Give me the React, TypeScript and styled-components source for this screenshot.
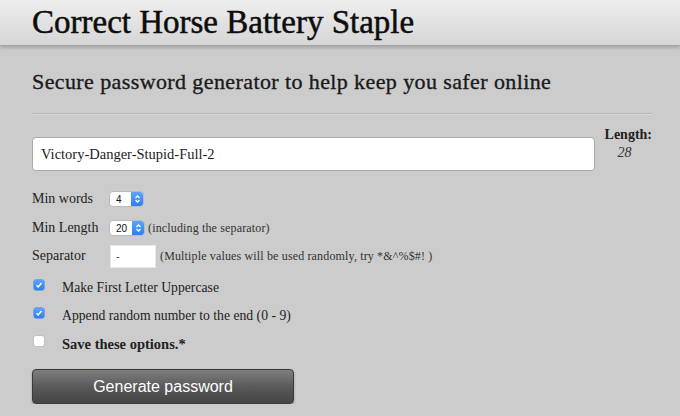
import * as React from "react";
import styled, { createGlobalStyle } from "styled-components";

const GlobalStyle = createGlobalStyle`
  html, body {
    margin: 0;
    padding: 0;
    background: #cccccc;
  }
  body {
    font-family: "Liberation Serif", "DejaVu Serif", serif;
    color: #222;
  }
`;

const Header = styled.header`
  height: 45px;
  padding-left: 32px;
  display: flex;
  align-items: center;
  background: linear-gradient(#eeeeee, #d6d6d6);
  border-bottom: 1px solid #a3a3a3;
  box-shadow: 0 2px 3px rgba(0, 0, 0, 0.18);
`;

const Title = styled.h1`
  margin: 0;
  font-size: 33px;
  font-weight: normal;
  color: #0d0d0d;
  -webkit-text-stroke: 0.5px #0d0d0d;
`;

const Main = styled.main`
  padding: 0 28px 0 32px;
`;

const Subtitle = styled.h2`
  margin: 22px 0 0;
  font-size: 22px;
  line-height: 28px;
  font-weight: normal;
  letter-spacing: 0.4px;
  color: #1a1a1a;
  -webkit-text-stroke: 0.35px #1a1a1a;
`;

const Rule = styled.hr`
  margin: 17px 0 0;
  border: 0;
  border-top: 1px solid #b8b8b8;
  border-bottom: 1px solid #d8d8d8;
`;

const PasswordRow = styled.div`
  display: flex;
  align-items: flex-start;
  margin-top: 12px;
`;

const PasswordInput = styled.div`
  box-sizing: border-box;
  width: 566px;
  height: 34px;
  margin-top: 10px;
  padding: 0 8px;
  display: flex;
  align-items: center;
  background: #fff;
  border: 1px solid #aaa;
  border-radius: 4px;
  font-size: 14.5px;
  color: #222;
`;

const LengthBox = styled.div`
  margin-left: 10px;
  display: flex;
  flex-direction: column;
`;

const LengthLabel = styled.div`
  font-size: 14px;
  font-weight: bold;
  line-height: 16px;
`;

const LengthValue = styled.div`
  font-size: 14px;
  font-style: italic;
  margin: 2px 0 0 13px;
  color: #333;
`;

const OptionRow = styled.div<{ $top: number }>`
  display: flex;
  align-items: center;
  height: 24px;
  margin-top: ${(p) => p.$top}px;
`;

const OptionLabel = styled.div`
  width: 78px;
  font-size: 14px;
  color: #222;
`;

const SelectBox = styled.div<{ $w: number }>`
  display: flex;
  height: 14px;
  width: ${(p) => p.$w}px;
  border-radius: 3px;
  background: #fff;
  box-shadow: 0 0 0 0.5px #aaa;
  overflow: hidden;
  font-family: "Liberation Sans", Arial, sans-serif;
  font-size: 10px;
`;

const SelectValue = styled.div`
  flex: 1;
  display: flex;
  align-items: center;
  padding-left: 6px;
  color: #111;
`;

const Stepper = styled.div`
  width: 12px;
  display: flex;
  align-items: center;
  justify-content: center;
  background: linear-gradient(#5aa3ff, #2e7ef0);
`;

const Note = styled.span`
  margin-left: 4px;
  font-size: 12px;
  letter-spacing: 0.15px;
  color: #333;
`;

const SeparatorInput = styled.div`
  box-sizing: border-box;
  width: 46px;
  height: 23px;
  background: #fff;
  border: 1px solid #e8e8e8;
  display: flex;
  align-items: center;
  padding-left: 5px;
  font-family: "Liberation Sans", Arial, sans-serif;
  font-size: 11px;
  color: #333;
`;

const CheckRow = styled.label<{ $top: number }>`
  display: flex;
  align-items: center;
  height: 20px;
  margin-top: ${(p) => p.$top}px;
`;

const Box = styled.span<{ $on: boolean }>`
  box-sizing: border-box;
  width: 10px;
  height: 10px;
  margin-left: 2px;
  margin-top: -6px;
  border-radius: 2px;
  display: flex;
  align-items: center;
  justify-content: center;
  background: ${(p) => (p.$on ? "linear-gradient(#5aa3ff, #2e7ef0)" : "#fff")};
  box-shadow: 0 0 0 0.5px ${(p) => (p.$on ? "#2f79e0" : "#b5b5b5")};
`;

const CheckText = styled.span<{ $bold?: boolean }>`
  margin-left: 18px;
  font-size: ${(p) => (p.$bold ? "14.5px" : "13.7px")};
  font-weight: ${(p) => (p.$bold ? "bold" : "normal")};
  color: #222;
`;

const Button = styled.button`
  margin-top: 15px;
  width: 262px;
  height: 35px;
  border: 1px solid #3a3a3a;
  border-radius: 4px;
  background: linear-gradient(#7f7f7f, #5a5a5a 50%, #454545);
  box-shadow: 0 1px 2px rgba(0, 0, 0, 0.3);
  color: #fff;
  font-family: "Liberation Sans", Arial, sans-serif;
  font-size: 16px;
  cursor: pointer;
`;

const Chevrons = () => (
  <svg width="7" height="10" viewBox="0 0 7 10">
    <path d="M1.5 4 L3.5 2 L5.5 4 M1.5 6 L3.5 8 L5.5 6" fill="none" stroke="#fff" strokeWidth="1.3" />
  </svg>
);

const Tick = () => (
  <svg width="8" height="8" viewBox="0 0 8 8">
    <path d="M1.5 4.2 L3.2 5.9 L6.5 2" fill="none" stroke="#fff" strokeWidth="1.5" />
  </svg>
);

const Select = ({ value, width }: { value: string; width: number }) => (
  <SelectBox $w={width}>
    <SelectValue>{value}</SelectValue>
    <Stepper>
      <Chevrons />
    </Stepper>
  </SelectBox>
);

const Check = ({ on, label, bold, top }: { on: boolean; label: string; bold?: boolean; top: number }) => (
  <CheckRow $top={top}>
    <Box $on={on}>{on && <Tick />}</Box>
    <CheckText $bold={bold}>{label}</CheckText>
  </CheckRow>
);

export default function App() {
  const password = "Victory-Danger-Stupid-Full-2";
  return (
    <>
      <GlobalStyle />
      <Header>
        <Title>Correct Horse Battery Staple</Title>
      </Header>
      <Main>
        <Subtitle>Secure password generator to help keep you safer online</Subtitle>
        <Rule />
        <PasswordRow>
          <PasswordInput>{password}</PasswordInput>
          <LengthBox>
            <LengthLabel>Length:</LengthLabel>
            <LengthValue>{password.length}</LengthValue>
          </LengthBox>
        </PasswordRow>
        <OptionRow $top={16}>
          <OptionLabel>Min words</OptionLabel>
          <Select value="4" width={33} />
        </OptionRow>
        <OptionRow $top={5}>
          <OptionLabel>Min Length</OptionLabel>
          <Select value="20" width={34} />
          <Note>(including the separator)</Note>
        </OptionRow>
        <OptionRow $top={4}>
          <OptionLabel>Separator</OptionLabel>
          <SeparatorInput>-</SeparatorInput>
          <Note>(Multiple values will be used randomly, try *&amp;^%$#! )</Note>
        </OptionRow>
        <Check top={10} on label="Make First Letter Uppercase" />
        <Check top={8} on label="Append random number to the end (0 - 9)" />
        <Check top={8} on={false} bold label="Save these options.*" />
        <Button>Generate password</Button>
      </Main>
    </>
  );
}
